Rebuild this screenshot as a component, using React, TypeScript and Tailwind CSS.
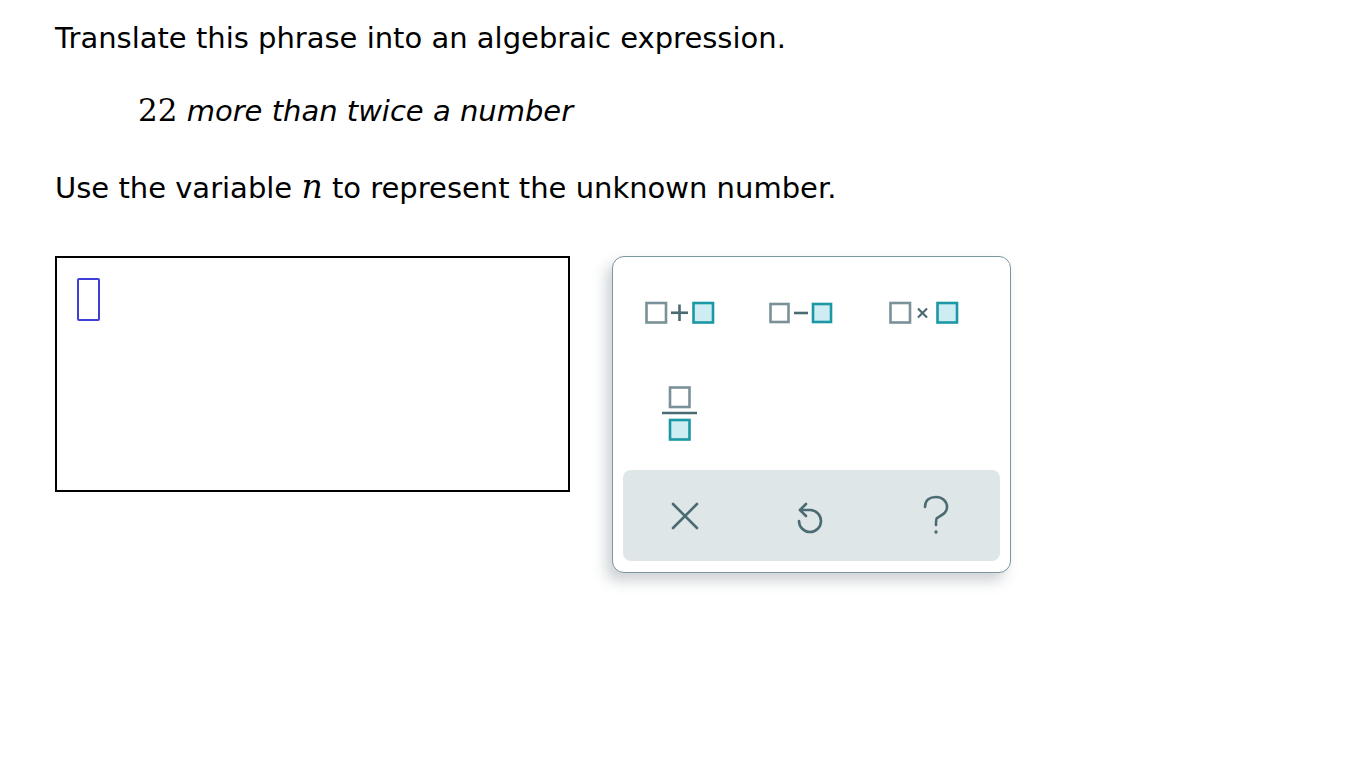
import React from 'react';

const Grey = '#7b9199';
const Teal = '#1b98a6';
const Fill = '#cdedf3';
const Ink = '#4b6b73';

function OpIcon({ op }: { op: '+' | '-' | 'x' }) {
  if (op === '+') {
    return (
      <svg width="72" height="26" viewBox="0 0 72 26">
        <rect x="2.5" y="3" width="19.5" height="19.5" fill="none" stroke={Grey} strokeWidth="2.6" />
        <g stroke={Ink} strokeWidth="2.6">
          <line x1="27" y1="12.75" x2="44" y2="12.75" />
          <line x1="35.5" y1="4.5" x2="35.5" y2="21" />
        </g>
        <rect x="49.5" y="3" width="19.5" height="19.5" fill={Fill} stroke={Teal} strokeWidth="2.6" />
      </svg>
    );
  }
  if (op === '-') {
    return (
      <svg width="66" height="26" viewBox="0 0 66 26">
        <rect x="2.5" y="4" width="18" height="18" fill="none" stroke={Grey} strokeWidth="2.6" />
        <line x1="26" y1="13" x2="40" y2="13" stroke={Ink} strokeWidth="2.6" />
        <rect x="45" y="4" width="18" height="18" fill={Fill} stroke={Teal} strokeWidth="2.6" />
      </svg>
    );
  }
  return (
    <svg width="72" height="26" viewBox="0 0 72 26">
      <rect x="2.5" y="3" width="19.5" height="19.5" fill="none" stroke={Grey} strokeWidth="2.6" />
      <g stroke={Ink} strokeWidth="2.2">
        <line x1="30" y1="8.5" x2="39" y2="17.5" />
        <line x1="39" y1="8.5" x2="30" y2="17.5" />
      </g>
      <rect x="49.5" y="3" width="19.5" height="19.5" fill={Fill} stroke={Teal} strokeWidth="2.6" />
    </svg>
  );
}

function FracIcon() {
  return (
    <svg width="40" height="60" viewBox="0 0 40 60">
      <rect x="10" y="4.5" width="19.5" height="19.5" fill="none" stroke={Grey} strokeWidth="2.6" />
      <line x1="2" y1="30" x2="37" y2="30" stroke={Ink} strokeWidth="2.6" />
      <rect x="10" y="37" width="19.5" height="19.5" fill={Fill} stroke={Teal} strokeWidth="2.6" />
    </svg>
  );
}

export default function App() {
  return (
    <div className="min-h-screen bg-white text-black" style={{ fontFamily: '"DejaVu Sans", sans-serif' }}>
      <div className="pl-[55px] pt-[20px]">
        <p className="text-[29px] leading-[36px]">Translate this phrase into an algebraic expression.</p>
        <p className="mt-[36px] pl-[83px] text-[29px] leading-[36px]">
          <span className="text-[31px]" style={{ fontFamily: '"DejaVu Serif", serif' }}>22</span>{' '}
          <span className="italic">more than twice a number</span>
        </p>
        <p className="mt-[40px] text-[29px] leading-[36px]">
          Use the variable{' '}
          <span className="italic text-[33px]" style={{ fontFamily: '"DejaVu Serif", serif' }}>n</span>{' '}
          to represent the unknown number.
        </p>

        <div className="mt-[50px] flex items-start gap-[42px]">
          <div className="w-[515px] h-[236px] border-2 border-black pl-[20px] pt-[20px]">
            <div className="w-[23px] h-[43px] border-2 border-[#3f3fd8] rounded-[2px]" />
          </div>

          <div className="w-[399px] h-[317px] rounded-[12px] border border-[#7c969e] bg-white shadow-[-6px_8px_14px_rgba(60,80,90,0.25)] px-[10px] pt-[43px] pb-[11px] flex flex-col">
            <div className="flex -ml-[3px]">
              <div className="w-[120px] flex justify-center"><OpIcon op="+" /></div>
              <div className="w-[122px] flex justify-center"><OpIcon op="-" /></div>
              <div className="w-[124px] flex justify-center"><OpIcon op="x" /></div>
            </div>
            <div className="flex mt-[57px] -ml-[3px]">
              <div className="w-[120px] flex justify-center"><FracIcon /></div>
            </div>
            <div className="mt-auto h-[91px] rounded-[8px] bg-[#dfe6e8] flex items-center">
              <div className="w-[124px] flex justify-center">
                <svg width="30" height="30" viewBox="0 0 30 30" stroke={Ink} strokeWidth="2.6" strokeLinecap="round">
                  <line x1="3" y1="3" x2="27" y2="27" />
                  <line x1="27" y1="3" x2="3" y2="27" />
                </svg>
              </div>
              <div className="w-[126px] flex justify-center">
                <svg width="32" height="38" viewBox="0 0 32 38" fill="none" stroke={Ink} strokeWidth="2.6" strokeLinecap="round" strokeLinejoin="round">
                  <path d="M5 24 A11 11 0 1 0 16 13 H6" />
                  <path d="M12 7 L6 13 L12 19" />
                </svg>
              </div>
              <div className="w-[126px] flex justify-center">
                <svg width="30" height="42" viewBox="0 0 30 42" fill="none" stroke={Ink} strokeWidth="2.6" strokeLinecap="round">
                  <path d="M4 12 C4 5 9 2 15 2 C21 2 26 6 26 12 C26 18 21 20 16 23 C15 24 15 26 15 30" />
                  <circle cx="15" cy="37" r="1.7" fill={Ink} stroke="none" />
                </svg>
              </div>
            </div>
          </div>
        </div>
      </div>
    </div>
  );
}
